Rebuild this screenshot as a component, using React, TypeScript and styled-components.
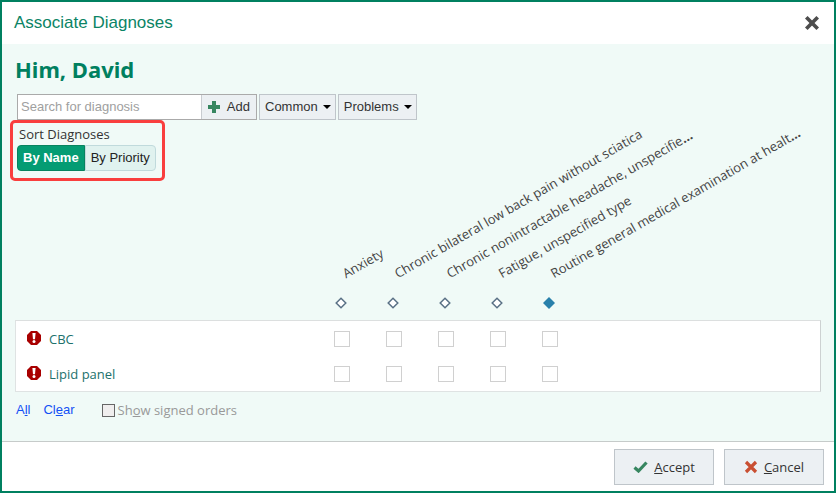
import React, { useState } from "react";
import styled, { createGlobalStyle } from "styled-components";

const humanist = '"Open Sans", "Noto Sans", sans-serif';
const grotesque = '"Liberation Sans", Arial, sans-serif';

const GlobalStyle = createGlobalStyle`
  *, *::before, *::after { box-sizing: border-box; }
  body { margin: 0; font-family: ${humanist}; font-size: 13px; color: #333; }
  button, input { font: inherit; }
`;

const Dialog = styled.div`
  display: flex;
  flex-direction: column;
  min-height: 100vh;
  border: 2px solid #008060;
  background: #fff;
`;

const TitleBar = styled.header`
  display: flex;
  align-items: center;
  justify-content: space-between;
  height: 42px;
  padding: 0 12px;
`;

const Title = styled.h1`
  margin: 0;
  font: 400 17px/20px ${grotesque};
  color: #0b8465;
`;

const CloseButton = styled.button`
  display: flex;
  padding: 2px;
  border: 0;
  background: none;
`;

const Body = styled.main`
  flex: 1;
  padding: 10px 13px 16px;
  background: #f0faf7;
`;

const Patient = styled.h2`
  margin: 0 0 10px;
  font-family: "Noto Sans", sans-serif;
  font-size: 22px;
  line-height: 30px;
  font-weight: 700;
  color: #008060;
`;

const Toolbar = styled.div`
  display: flex;
  gap: 2px;
  height: 26px;
  padding-left: 2px;
  font: 13px/16px ${grotesque};
`;

const SearchGroup = styled.div`
  display: flex;
  width: 240px;
  border: 1px solid #aaa;
`;

const SearchInput = styled.input`
  flex: 1;
  min-width: 0;
  padding: 0 3px;
  border: 0;
  background: #fff;
  &::placeholder { color: #a0a0a0; opacity: 1; }
`;

const AddButton = styled.button`
  display: flex;
  align-items: center;
  gap: 7px;
  padding: 0 6px;
  border: 0;
  border-left: 1px solid #c8ccd0;
  background: #ecf0f3;
  color: #333;
`;

const MenuButton = styled.button`
  display: flex;
  align-items: center;
  gap: 5px;
  padding: 0 4px 0 5px;
  border: 1px solid #bfc5ca;
  background: #ecf0f3;
  color: #333;
`;

const SortGroup = styled.fieldset`
  width: fit-content;
  min-width: 155px;
  margin: 0 0 0 -5px;
  padding: 3px 4px 7px;
  border: 3px solid #f93e3e;
  border-radius: 5px;
`;

const SortLabel = styled.div`
  padding-left: 2px;
  line-height: 16px;
  margin-bottom: 3px;
  color: #333;
`;

const Segments = styled.div`
  display: flex;
  height: 26px;
`;

const Segment = styled.button<{ $active: boolean }>`
  padding: 0 5px;
  border: 1px solid ${(p) => (p.$active ? "#07835f" : "#c0dadc")};
  background: ${(p) => (p.$active ? "#049c73" : "#e0f2ef")};
  color: ${(p) => (p.$active ? "#fff" : "#222")};
  font: ${(p) => (p.$active ? 700 : 400)} 13px/16px ${grotesque};
  white-space: nowrap;
  &:first-child { border-radius: 4px 0 0 4px; }
  &:last-child { border-radius: 0 4px 4px 0; }
`;

const Grid = styled.table`
  width: 100%;
  table-layout: fixed;
  border-collapse: separate;
  border-spacing: 0;
`;

const NameColumn = styled.col`
  width: 301px;
`;

const MarkColumn = styled.col`
  width: 52px;
`;

const HeadCell = styled.th`
  height: 139px;
  padding: 0 0 11px 19px;
  vertical-align: bottom;
  text-align: left;
  font-weight: 400;
`;

const SlantedLabel = styled.div`
  width: 300px;
  margin: 0 0 15px 13px;
  line-height: 18px;
  white-space: nowrap;
  color: #444;
  transform: rotate(-30deg);
  transform-origin: left bottom;
`;

const OrderRows = styled.tbody`
  background: #fff;
  & > tr:first-child > * { border-top: 1px solid #dcdfdf; }
  & > tr:last-child > * { border-bottom: 1px solid #dfe3e3; }
  & > tr > :first-child { border-left: 1px solid #dfe3e3; }
  & > tr > :last-child { border-right: 1px solid #cdd2d2; }
`;

const OrderCell = styled.th`
  height: 36px;
  padding: 0 0 0 11px;
  text-align: left;
  font-weight: 400;
  color: #21716c;
`;

const OrderName = styled.div`
  display: flex;
  align-items: center;
  gap: 8px;
  & > svg { margin-bottom: 2px; }
`;

const MarkCell = styled.td`
  padding: 0;
`;

const Box = styled.input`
  appearance: none;
  display: block;
  width: 16px;
  height: 16px;
  margin: 0 auto;
  border: 1px solid #d0d0d0;
  background: #fff;
  &:checked { background: #2980ab; }
`;

const Options = styled.div`
  display: flex;
  align-items: center;
  height: 20px;
  margin-top: 8px;
  padding-left: 1px;
`;

const TextLink = styled.a`
  margin-right: 13px;
  font: 13px/18px ${grotesque};
  color: #1450f5;
  text-decoration: none;
`;

const SignedOption = styled.label`
  display: flex;
  align-items: center;
  gap: 3px;
  margin-left: 14px;
  color: #999;
`;

const SignedBox = styled.input`
  appearance: none;
  width: 13px;
  height: 13px;
  margin: 0;
  border: 1px solid #666;
  background: #f0eeee;
`;

const Footer = styled.footer`
  display: flex;
  justify-content: flex-end;
  gap: 10px;
  padding: 7px 10px 6px;
  border-top: 1px solid #c6cbca;
`;

const ActionButton = styled.button`
  display: flex;
  align-items: center;
  justify-content: center;
  gap: 6px;
  width: 100px;
  height: 36px;
  padding: 0;
  border: 1px solid #bfc5ca;
  background: #ecf0f3;
  color: #333;
`;

const Cross = ({ size, color }: { size: number; color: string }) => (
  <svg width={size} height={size} viewBox="0 0 14 14" aria-hidden="true">
    <path d="M2 2l10 10M12 2L2 12" stroke={color} strokeWidth="3.2" />
  </svg>
);

const Caret = () => (
  <svg width="8" height="4" viewBox="0 0 8 4" aria-hidden="true">
    <path d="M0 0h8L4 4z" fill="#000" />
  </svg>
);

const Plus = () => (
  <svg width="12" height="12" viewBox="0 0 12 12" aria-hidden="true">
    <path d="M4 0h4v4h4v4H8v4H4V8H0V4h4z" fill="#378660" />
  </svg>
);

const Check = () => (
  <svg width="15" height="12" viewBox="0 0 15 12" aria-hidden="true">
    <path d="M1.5 6.5L5.5 10L13.5 1.5" fill="none" stroke="#378660" strokeWidth="3.2" />
  </svg>
);

const Alert = () => (
  <svg width="14" height="14" viewBox="0 0 14 14" aria-hidden="true">
    <path d="M4 0h6l4 4v6l-4 4H4l-4-4V4z" fill="#a80000" />
    <path d="M5.4 2h3.2L8 8.2H6z" fill="#fff" />
    <circle cx="7" cy="10.6" r="1.5" fill="#fff" />
  </svg>
);

const Diamond = ({ filled }: { filled: boolean }) => (
  <svg width="12" height="12" viewBox="0 0 12 12" aria-hidden="true" display="block">
    <path
      d={filled ? "M6 0l6 6-6 6-6-6z" : "M6 1.2L10.8 6 6 10.8 1.2 6z"}
      fill={filled ? "#2980ab" : "#fff"}
      stroke={filled ? "none" : "#5a7186"}
      strokeWidth="1.5"
    />
  </svg>
);

const diagnoses = [
  { name: "Anxiety", cut: false, primary: false },
  { name: "Chronic bilateral low back pain without sciatica", cut: false, primary: false },
  { name: "Chronic nonintractable headache, unspecifie", cut: true, primary: false },
  { name: "Fatigue, unspecified type", cut: false, primary: false },
  { name: "Routine general medical examination at healt", cut: true, primary: true },
];

const orders = ["CBC", "Lipid panel"];

export default function App() {
  const [sort, setSort] = useState("By Name");
  return (
    <>
      <GlobalStyle />
      <Dialog role="dialog" aria-labelledby="dialog-title">
        <TitleBar>
          <Title id="dialog-title">Associate Diagnoses</Title>
          <CloseButton aria-label="Close">
            <Cross size={16} color="#4d4d4d" />
          </CloseButton>
        </TitleBar>
        <Body>
          <Patient>Him, David</Patient>
          <Toolbar>
            <SearchGroup>
              <SearchInput type="text" aria-label="Search for diagnosis" placeholder="Search for diagnosis" />
              <AddButton>
                <Plus />
                Add
              </AddButton>
            </SearchGroup>
            <MenuButton>
              Common
              <Caret />
            </MenuButton>
            <MenuButton>
              Problems
              <Caret />
            </MenuButton>
          </Toolbar>
          <SortGroup aria-labelledby="sort-label">
            <SortLabel id="sort-label">Sort Diagnoses</SortLabel>
            <Segments>
              {["By Name", "By Priority"].map((label) => (
                <Segment key={label} $active={sort === label} aria-pressed={sort === label} onClick={() => setSort(label)}>
                  {label}
                </Segment>
              ))}
            </Segments>
          </SortGroup>
          <Grid>
            <colgroup>
              <NameColumn />
              {diagnoses.map((d) => (
                <MarkColumn key={d.name} />
              ))}
              <col />
            </colgroup>
            <thead>
              <tr>
                <td />
                {diagnoses.map((d) => (
                  <HeadCell key={d.name} scope="col">
                    <SlantedLabel>
                      {d.name}
                      {d.cut && <b>…</b>}
                    </SlantedLabel>
                    <Diamond filled={d.primary} />
                  </HeadCell>
                ))}
                <td />
              </tr>
            </thead>
            <OrderRows>
              {orders.map((order) => (
                <tr key={order}>
                  <OrderCell scope="row">
                    <OrderName>
                      <Alert />
                      {order}
                    </OrderName>
                  </OrderCell>
                  {diagnoses.map((d) => (
                    <MarkCell key={d.name}>
                      <Box type="checkbox" aria-label={`${order}: ${d.name}`} />
                    </MarkCell>
                  ))}
                  <td />
                </tr>
              ))}
            </OrderRows>
          </Grid>
          <Options>
            <TextLink href="#all">
              A<u>l</u>l
            </TextLink>
            <TextLink href="#clear">
              Cl<u>e</u>ar
            </TextLink>
            <SignedOption>
              <SignedBox type="checkbox" />
              <span>
                Sh<u>o</u>w signed orders
              </span>
            </SignedOption>
          </Options>
        </Body>
        <Footer>
          <ActionButton>
            <Check />
            <span>
              <u>A</u>ccept
            </span>
          </ActionButton>
          <ActionButton>
            <Cross size={14} color="#c94f32" />
            <span>
              <u>C</u>ancel
            </span>
          </ActionButton>
        </Footer>
      </Dialog>
    </>
  );
}
